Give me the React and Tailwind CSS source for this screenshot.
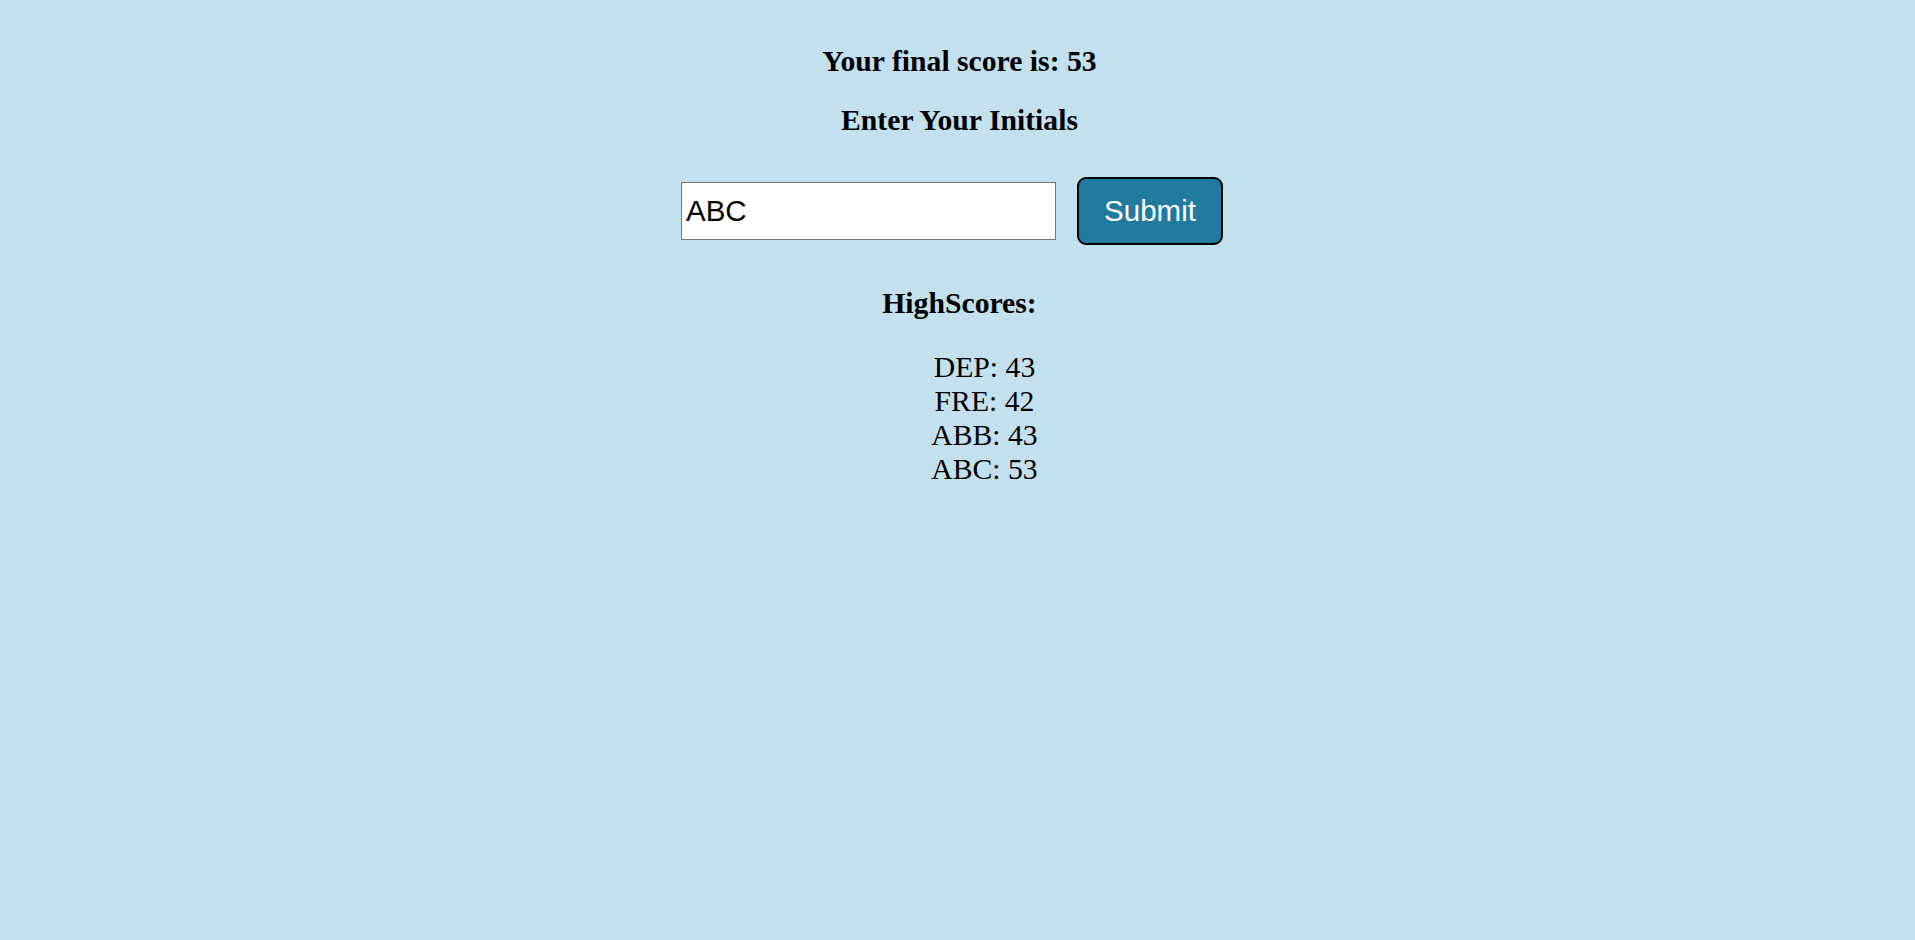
import { useState } from "react";

const HIGH_SCORES = [
  { initials: "DEP", score: 43 },
  { initials: "FRE", score: 42 },
  { initials: "ABB", score: 43 },
  { initials: "ABC", score: 53 },
];

export default function App() {
  const [initials, setInitials] = useState("ABC");

  return (
    <div className="min-h-screen bg-[#c2e0ee] pt-[44px] font-['Liberation_Serif','Times_New_Roman',serif] text-[29.7px] leading-[34px] text-black">
      <h2 className="pl-[4px] text-center font-bold">Your final score is: 53</h2>
      <h2 className="mt-[25px] pl-[4px] text-center font-bold">Enter Your Initials</h2>

      <form
        className="mt-[40px] flex items-center justify-center gap-[21px] pr-[11px]"
        onSubmit={(e) => e.preventDefault()}
      >
        <input
          type="text"
          value={initials}
          onChange={(e) => setInitials(e.target.value)}
          className="h-[58px] w-[375px] border border-[#767676] bg-white px-[4px] font-['Liberation_Sans',Arial,sans-serif] text-[29.5px] text-black outline-none"
        />
        <button
          type="submit"
          className="h-[68px] w-[146px] rounded-[9px] border-2 border-black bg-[#217ba0] font-['Liberation_Sans',Arial,sans-serif] text-[29.5px] leading-[34px] text-white"
        >
          Submit
        </button>
      </form>

      <h3 className="mt-[41px] pl-[4px] text-center font-bold">HighScores:</h3>
      <ul className="mt-[30px] list-none pl-[54px] text-center">
        {HIGH_SCORES.map((row) => (
          <li key={row.initials}>
            {row.initials}: {row.score}
          </li>
        ))}
      </ul>
    </div>
  );
}
